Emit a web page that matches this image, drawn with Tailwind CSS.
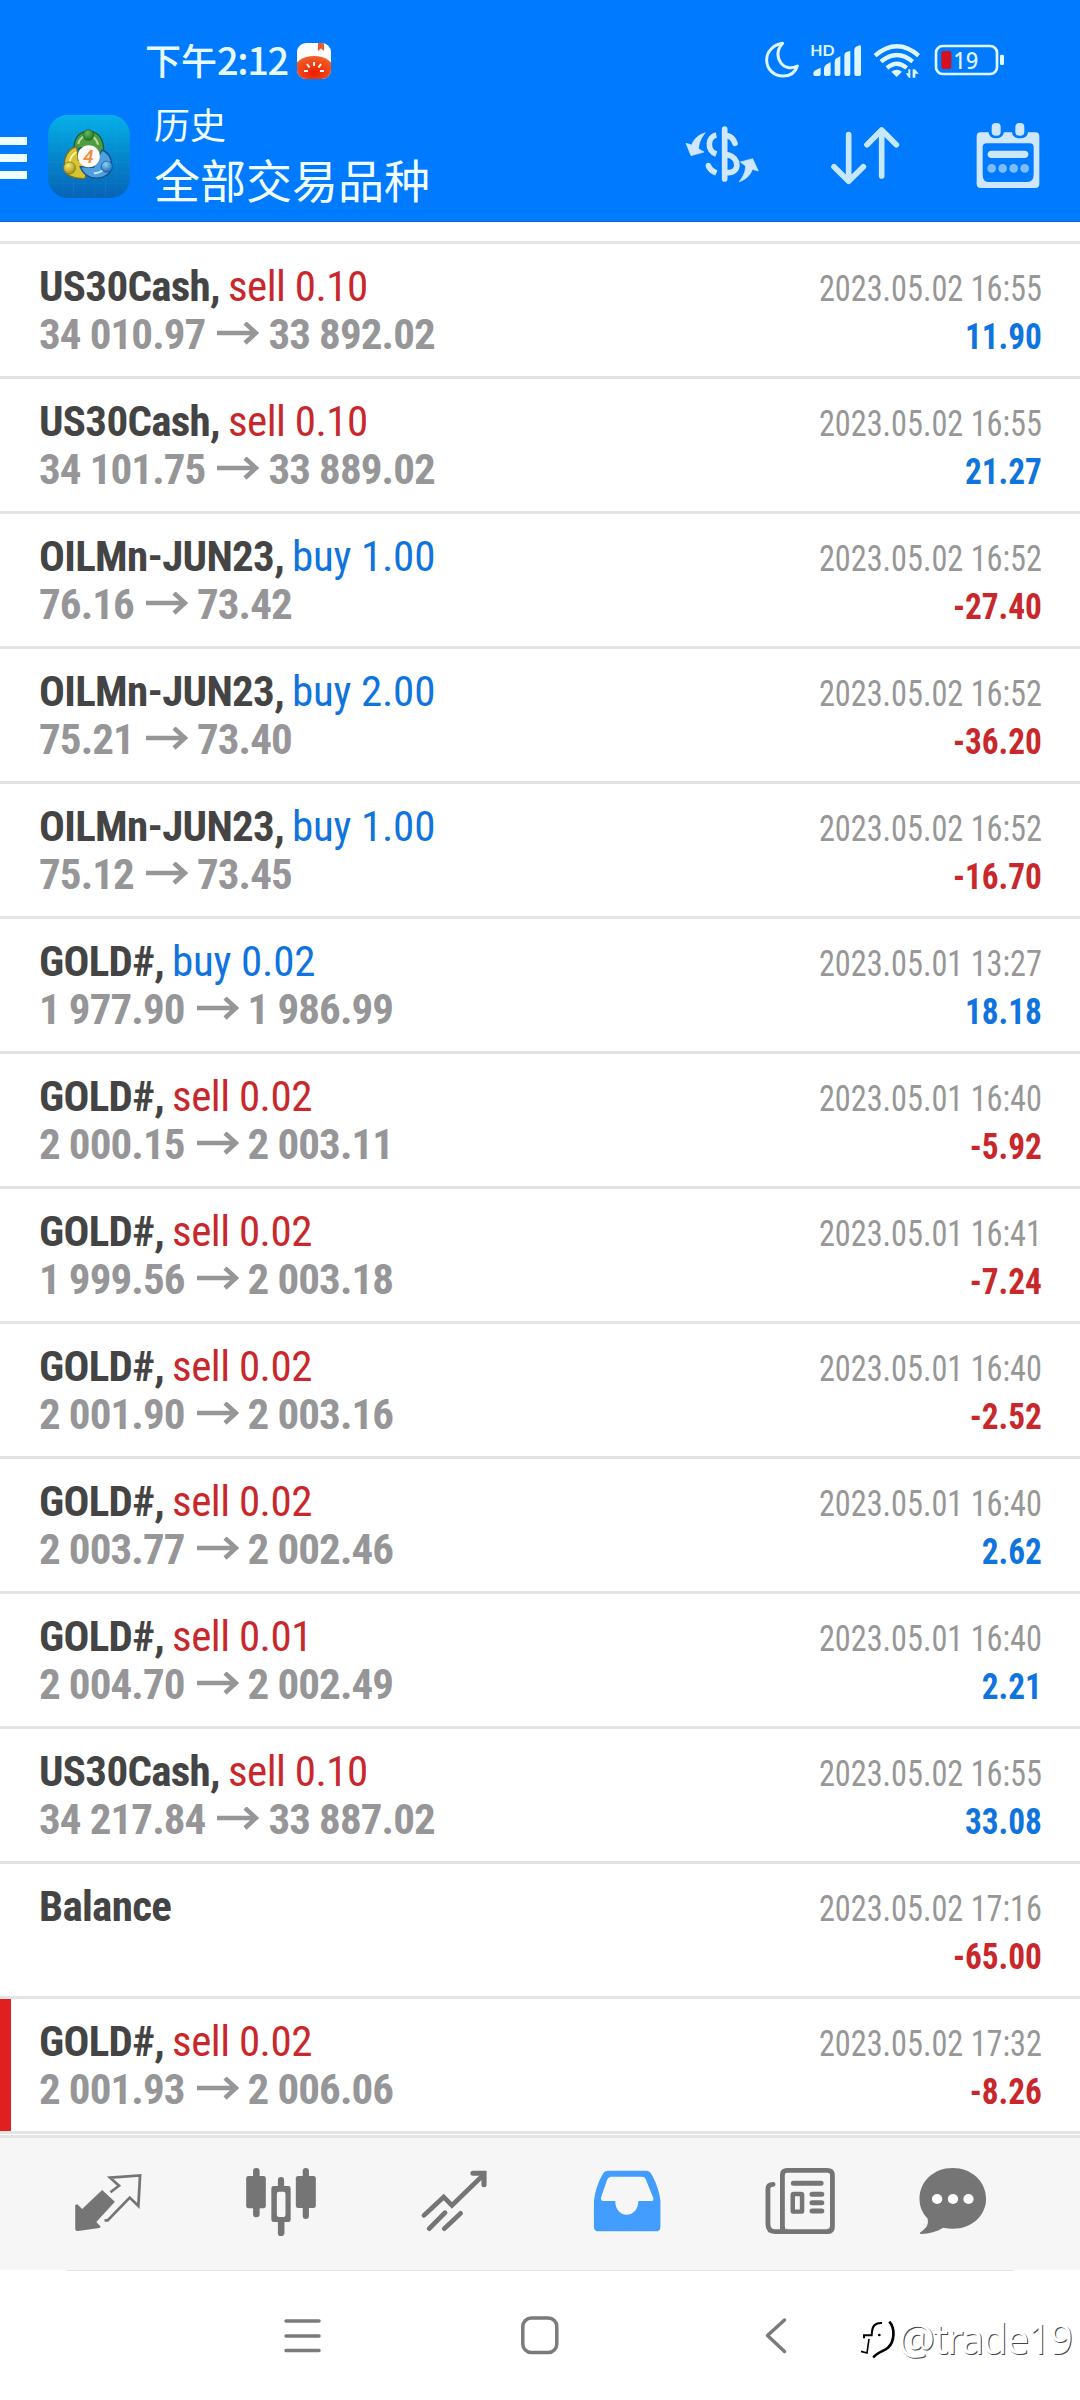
<!DOCTYPE html>
<html lang="zh-CN">
<head>
<meta charset="utf-8">
<title>历史</title>
<script src="https://cdn.jsdelivr.net/npm/@tailwindcss/browser@4"></script>
</head>
<body class="w-[1080px] h-[2400px] bg-white flex flex-col overflow-hidden font-['Roboto_Condensed',Roboto,'Noto_Sans_CJK_SC',sans-serif]">

<header class="h-[222px] shrink-0 bg-[#007aff] border-b border-[#1767c4] text-[#f0ffff] font-['Noto_Sans_CJK_SC',sans-serif]">
  <!-- status bar -->
  <div class="h-[108px] flex pt-[39px]">
    <div class="ml-[145px] w-[152px] h-[40px] flex items-baseline leading-[40px] whitespace-nowrap text-[#e6fbff] font-medium">
      <span class="text-[36px]">下午</span><span class="text-[38px] tracking-[-1.4px]">2:12</span>
    </div>
    <svg class="mt-[4px] w-[34px] h-[36px]" viewBox="0 0 34 36">
      <defs>
        <clipPath id="tile"><rect width="34" height="36" rx="9"/></clipPath>
        <radialGradient id="tom" cx=".5" cy=".6" r=".6"><stop offset="0" stop-color="#ee1c00"/><stop offset="1" stop-color="#f0622a"/></radialGradient>
      </defs>
      <g clip-path="url(#tile)">
        <rect width="34" height="36" fill="#fff"/>
        <ellipse cx="17" cy="27" rx="20" ry="14" fill="url(#tom)"/>
        <path d="M21 0h6v8l-3-2.500-3 2.500z" fill="#ea5a30"/>
        <path d="M17 19v4M10 21l2.500 3.500M24 21l-2.500 3.500M7 28h4M27 28h-4" stroke="#fff" stroke-width="2"/>
      </g>
    </svg>
    <svg class="mt-px ml-[429px] w-[250px] h-[40px]" viewBox="360 60 750 120" fill="#def6ff">
      <path d="M428 70c-28 4-48 25-48 49 0 28 21 49 49 49 21 0 37-10 43-30-10 5-17 6-25 5-20-3-34-22-33-42 0-12 6-22 14-31z" fill="none" stroke="#def6ff" stroke-width="9" stroke-linejoin="round"/>
      <text x="511" y="108" font-size="47" font-family="Lato" font-weight="700" textLength="73" lengthAdjust="spacingAndGlyphs">HD</text>
      <path d="M520 160q0-6 6-9l16-8v19q0 6-5 6h-12q-5 0-5-5zM552 146q0-8 6-12l14-8v36q0 6-5 6h-10q-5 0-5-5zM584 126q0-8 5-11l12-6v53q0 6-5 6h-8q-4 0-4-5zM613 107q0-7 5-10l13-5v70q0 6-5 6h-8q-5 0-5-5zM643 90q0-8 5-10l10-4q5-1 5 4v83q0 5-5 5h-10q-5 0-5-5z"/>
      <g fill="none" stroke="#def6ff" stroke-width="13"><path d="M705 107q66-56 131 0"/><path d="M723 125q48-40 95 0"/><path d="M741 144q30-26 59 0"/></g>
      <path d="M754 155q16-12 32 0l-16 16z"/>
      <path d="M797 160h8v-12h6v26h-4zM818 148h7l11 13h-10v12h-8z"/>
      <rect x="888" y="78" width="183" height="84" rx="20" fill="none" stroke="#def6ff" stroke-width="8"/>
      <rect x="1080" y="104" width="12" height="31" rx="4"/>
      <rect x="904" y="93" width="30" height="54" rx="6" fill="#d4111c"/>
      <text x="940" y="147" font-size="73" font-family="Noto Sans" font-weight="500" textLength="75" lengthAdjust="spacingAndGlyphs">19</text>
    </svg>
  </div>
  <!-- toolbar -->
  <div class="h-[112px] flex">
    <div class="mt-[29px] w-[27px] flex flex-col gap-[9px]">
      <i class="h-[8px] bg-[#eefeff]"></i><i class="h-[8px] bg-[#eefeff]"></i><i class="h-[8px] bg-[#eefeff]"></i>
    </div>
    <svg class="mt-[7px] ml-[21px] w-[82px] h-[83px]" viewBox="53 43 245 249">
      <defs>
        <linearGradient id="app" x1="0" y1="0" x2="0" y2="1"><stop offset="0" stop-color="#06b0e8"/><stop offset=".5" stop-color="#0587cc"/><stop offset="1" stop-color="#0763b8"/></linearGradient>
        <radialGradient id="gr" cx=".4" cy=".3" r=".7"><stop offset="0" stop-color="#6fb855"/><stop offset="1" stop-color="#1b7424"/></radialGradient>
        <radialGradient id="ye" cx=".4" cy=".3" r=".7"><stop offset="0" stop-color="#f2ea7a"/><stop offset="1" stop-color="#a88f10"/></radialGradient>
        <radialGradient id="bl" cx=".4" cy=".3" r=".7"><stop offset="0" stop-color="#8ed0fa"/><stop offset="1" stop-color="#1b6cb8"/></radialGradient>
      </defs>
      <rect x="53" y="43" width="245" height="249" rx="58" fill="url(#app)"/>
      <path d="M97 45v245M129 45v245M161 45v245M193 45v245M225 45v245M257 45v245M55 88h241M55 120h241M55 152h241M55 184h241M55 216h241M55 248h241" stroke="#4cc4f0" stroke-opacity=".14" stroke-width="2"/>
      <g stroke-width="4">
        <path d="M131 152C128 112 146 92 174 92c29 0 48 22 45 66l-12 14-22-32-36 2z" fill="#4f9c44" stroke="#1c5f3a"/>
        <path d="M139 138c-25 6-38 28-38 62 2 24 22 33 62 34l10-34-30-22z" fill="#d6c434" stroke="#766e24"/>
        <path d="M214 148c22 8 32 28 29 58-8 24-40 30-62 24-16-6-26-16-32-32l40 2z" fill="#4f9fdc" stroke="#15528e"/>
        <path d="M143 130c4-18 18-26 30-26s24 10 30 28" fill="none" stroke="#b5dc9e" stroke-width="6"/>
        <path d="M118 182c2-14 10-22 20-28" fill="none" stroke="#fff5a0" stroke-width="6"/>
        <path d="M232 180c0 20-16 36-42 38" fill="none" stroke="#bbe3fc" stroke-width="6"/>
        <circle cx="174" cy="103" r="16" fill="url(#gr)" stroke="#1c5f2a" stroke-width="2"/>
        <circle cx="117" cy="202" r="18" fill="url(#ye)" stroke="#766e24" stroke-width="2"/>
        <circle cx="229" cy="198" r="17" fill="url(#bl)" stroke="#15528e" stroke-width="2"/>
      </g>
      <circle cx="175" cy="167" r="33" fill="#fdfaf5"/>
      <text x="174" y="188" text-anchor="middle" font-size="56" font-family="Roboto" font-weight="500" font-style="italic" fill="#f08a3c">4</text>
    </svg>
    <div class="ml-[24px] w-[526px] flex flex-col gap-[15px] font-normal">
      <div class="text-[36px] leading-[30px]">历史</div>
      <div class="text-[46px] leading-[50px]">全部交易品种</div>
    </div>
    <svg class="mt-[2px] w-[100px] h-[90px]" viewBox="0 0 300 270" fill="none" stroke="#cfe8ff" stroke-width="17" stroke-linecap="round">
      <path d="M134 57V207"/>
      <path d="M145 78c10 3 16 10 20 22M142 134c38 8 38 56 1 54"/>
      <path d="M109 75C83 80 79 122 109 132M85 167c3 10 10 16 24 22" stroke-linecap="butt"/>
      <circle cx="85" cy="166" r="8" fill="#cfe8ff" stroke="none"/>
      <path d="M75 69C55 74 41 88 35 105L18 100 33 137 72 126 56 117C56 100 62 86 75 69zM178 215c20-6 34-20 39-37l18 5-17-37-37 10 15 11c2 15-6 32-18 48z" fill="#cfe8ff" stroke-width="2" stroke-linejoin="round"/>
    </svg>
    <svg class="mt-[2px] ml-[48px] w-[76px] h-[90px]" viewBox="564 270 228 270" fill="none" stroke="#c6e8ff" stroke-width="17" stroke-linecap="round" stroke-linejoin="round">
      <path d="M626 344V482M582 440l44 44 44-44M725 468V332M681 374l44-44 44 44"/>
    </svg>
    <svg class="mt-[2px] ml-[68px] w-[72px] h-[90px]" viewBox="996 270 216 270" fill="#cfe6ff">
      <path fill-rule="evenodd" d="M1022 337h24q2 18 22 18t24-18h24q2 18 24 18t24-18h22q12 0 12 12v143q0 12-12 12h-164q-12 0-12-12v-143q0-12 12-12zM1040 370q-12 0-12 12v80q0 24 16 24h118q19 0 19-24v-80q0-12-12-12z"/>
      <rect x="1055" y="309" width="27" height="38" rx="12"/><rect x="1126" y="309" width="27" height="38" rx="12"/>
      <rect x="1043" y="392" width="122" height="22" rx="11"/>
      <g fill="#7cbcff"><circle cx="1055" cy="445" r="13"/><circle cx="1088" cy="445" r="13"/><circle cx="1121" cy="445" r="13"/><circle cx="1154" cy="445" r="13"/></g>
    </svg>
  </div>
</header>

<main id="deals" class="mt-[19px] h-[1893px] shrink-0 border-b-[3px] border-[#e3e3e3]"></main>

<nav class="mt-px h-[135px] shrink-0 bg-[#f6f6f6] border-t-[3px] border-[#e3e3e3] flex pt-[23px] pl-[68px] gap-[93px] text-[#757575]">
  <svg class="w-[80px] h-[80px]" viewBox="198 123 232 240" preserveAspectRatio="none" fill="none" stroke="currentColor" stroke-width="8">
    <path d="M297 210l37 35-54 61 13 14-4 4-62 9q-8 1-8-6V255l6-2 14 14z" fill="currentColor" stroke="none"/>
    <path d="M321 217l25-20-26-24 87-7-5 92-25-25-64 68h-9"/>
  </svg>
  <svg class="w-[80px] h-[80px]" viewBox="700 123 232 240" preserveAspectRatio="none" fill="currentColor">
    <rect x="715" y="168" width="57" height="97" rx="7"/><rect x="735" y="144" width="19" height="148" rx="9"/>
    <rect x="859" y="168" width="58" height="96" rx="7"/><rect x="879" y="144" width="18" height="153" rx="9"/>
    <path d="M807 198v-18q0-9 9-9t9 9v18h12q7 0 7 7v94q0 7-7 7h-11v32q0 10-10 10t-9-10v-32h-12q-7 0-7-7v-94q0-7 7-7zM810 215q-6 0-6 6v64q0 6 6 6h13q6 0 6-6v-64q0-6-6-6z" fill-rule="evenodd"/>
  </svg>
  <svg class="w-[80px] h-[80px]" viewBox="1202 123 232 240" preserveAspectRatio="none" fill="none" stroke="currentColor" stroke-width="14" stroke-linecap="round">
    <path d="M1231 286l57-55 24 25 92-92"/><path d="M1373 160h32v34" stroke-width="15"/><path d="M1246 326l46-48M1290 326l47-46"/>
  </svg>
  <svg class="w-[80px] h-[80px]" viewBox="138 123 232 240" preserveAspectRatio="none">
    <path fill="#429dff" fill-rule="evenodd" d="M198 152h111q11 0 17 12 22 42 25 80v76q0 14-14 14H173q-15 0-15-14v-76q5-46 27-84 5-8 13-8zM208 170q-8 0-11 8l-18 54q-3 11 7 11h34c0 55 66 55 67 0h36q10 0 7-10l-22-56q-3-7-10-7z"/>
  </svg>
  <svg class="w-[80px] h-[80px]" viewBox="641 123 232 240" preserveAspectRatio="none" fill="none" stroke="currentColor" stroke-width="15" stroke-linecap="round">
    <path d="M706 334V165q0-14 14-14h116q15 0 15 14v155q0 15-15 15H685q-21 0-21-22V207q0-14 15-14" stroke-width="14"/>
    <path d="M738 190h80M792 223h28M792 248h28M792 273h28"/>
    <rect x="736" y="222" width="27" height="53" rx="3" stroke-width="13"/>
    <path d="M712 320v8h8M845 320q0 8-8 8" stroke-width="3"/>
  </svg>
  <svg class="-ml-[19px] w-[80px] h-[80px]" viewBox="1103 123 232 240" preserveAspectRatio="none">
    <path transform="translate(17 0)" fill="currentColor" d="M1198 144c54 0 97 40 97 92 0 51-42 90-96 90q-14 0-28-3c-20 12-40 18-64 19q-7-1-2-5c20-14 24-26 20-42-15-16-23-36-23-59 0-52 42-92 96-92z"/>
    <g fill="#fff"><circle cx="1170" cy="237" r="15"/><circle cx="1216" cy="237" r="15"/><circle cx="1261" cy="237" r="15"/></g>
  </svg>
</nav>

<footer class="h-[127px] shrink-0 relative flex pt-[43px] pl-[273px]">
  <div class="absolute top-0 left-[66px] w-[948px] h-px bg-[#e2e2e2]"></div>
  <svg class="w-[60px] h-[44px]" viewBox="0 0 60 44" fill="none" stroke="#7b7b7b" stroke-width="3.500" stroke-linecap="round"><path d="M13 8h33M13 23h33M13 37.500h33"/></svg>
  <svg class="ml-[177px] w-[60px] h-[44px]" viewBox="510 0 60 44" fill="none" stroke="#7b7b7b" stroke-width="3.500"><rect x="522.800" y="5" width="34" height="34.500" rx="8.500"/></svg>
  <svg class="ml-[187px] w-[40px] h-[44px]" viewBox="757 0 40 44" fill="none" stroke="#7b7b7b" stroke-width="3.500" stroke-linecap="round" stroke-linejoin="round"><path d="M784.500 7l-17 15.500 17 16"/></svg>
  <div class="absolute left-[860px] top-[49px] flex">
    <svg class="w-[38px] h-[48px] overflow-visible" viewBox="30 70 114 144" fill="none" stroke="#000">
      <path d="M96 82q-28-2-30 26l-1 11H42v9" stroke-width="6"/>
      <path d="M118 78c18 20 16 60-4 78-10 10-34 14-44 30" stroke-width="8"/>
      <path d="M57 130l-6 42-18-5" stroke-width="5"/>
      <circle cx="88" cy="118" r="4" fill="#000" stroke="none"/>
    </svg>
    <span class="text-white font-['Noto_Sans'] text-[41px] leading-[38px] tracking-[-1.6px] whitespace-nowrap [text-shadow:1px_1px_0_#444]">@trade19</span>
  </div>
</footer>

<script>
const deals = [
  ['US30Cash', 'sell 0.10', '34 010.97', '33 892.02', '2023.05.02 16:55', '11.90'],
  ['US30Cash', 'sell 0.10', '34 101.75', '33 889.02', '2023.05.02 16:55', '21.27'],
  ['OILMn-JUN23', 'buy 1.00', '76.16', '73.42', '2023.05.02 16:52', '-27.40'],
  ['OILMn-JUN23', 'buy 2.00', '75.21', '73.40', '2023.05.02 16:52', '-36.20'],
  ['OILMn-JUN23', 'buy 1.00', '75.12', '73.45', '2023.05.02 16:52', '-16.70'],
  ['GOLD#', 'buy 0.02', '1 977.90', '1 986.99', '2023.05.01 13:27', '18.18'],
  ['GOLD#', 'sell 0.02', '2 000.15', '2 003.11', '2023.05.01 16:40', '-5.92'],
  ['GOLD#', 'sell 0.02', '1 999.56', '2 003.18', '2023.05.01 16:41', '-7.24'],
  ['GOLD#', 'sell 0.02', '2 001.90', '2 003.16', '2023.05.01 16:40', '-2.52'],
  ['GOLD#', 'sell 0.02', '2 003.77', '2 002.46', '2023.05.01 16:40', '2.62'],
  ['GOLD#', 'sell 0.01', '2 004.70', '2 002.49', '2023.05.01 16:40', '2.21'],
  ['US30Cash', 'sell 0.10', '34 217.84', '33 887.02', '2023.05.02 16:55', '33.08'],
  ['Balance', '', '', '', '2023.05.02 17:16', '-65.00'],
  ['GOLD#', 'sell 0.02', '2 001.93', '2 006.06', '2023.05.02 17:32', '-8.26'],
];
const arrow = '<svg class="w-[42px] h-[24px] ml-[12px] mr-[9px]" viewBox="0 0 42 24" fill="none" stroke="currentColor" stroke-width="4.500"><path d="M0 11h38M28 1l11 10-11 10"/></svg>';
document.getElementById('deals').innerHTML = deals.map(([sym, op, from, to, time, pl], i) => `
  <section class="h-[135px] border-t-[3px] border-[#e3e3e3] flex">
    <div class="w-[11px] ${i === deals.length - 1 ? 'bg-[#df1f20]' : ''}"></div>
    <div class="ml-[28px] pt-[18px] flex-1 text-[43px] leading-[48px]">
      <div class="flex gap-[8px]"><b class="font-bold tracking-[-0.7px] text-[#444]">${sym}${op ? ',' : ''}</b><span class="${op.startsWith('buy') ? 'tracking-[-0.2px] text-[#0f74de]' : 'tracking-[-0.5px] text-[#c8282b]'}">${op}</span></div>
      ${from ? `<div class="flex items-center font-bold tracking-[-0.9px] text-[#969698]"><span>${from}</span>${arrow}<span>${to}</span></div>` : ''}
    </div>
    <div class="mr-[38px] pt-[21px] text-right text-[36px] leading-[48px]">
      <div class="origin-right scale-x-[0.896] text-[#979797]">${time}</div>
      <div class="origin-right scale-x-[0.925] font-bold ${pl.startsWith('-') ? 'text-[#c8282b]' : 'text-[#0f74de]'}">${pl}</div>
    </div>
  </section>`).join('');
</script>
</body>
</html>
